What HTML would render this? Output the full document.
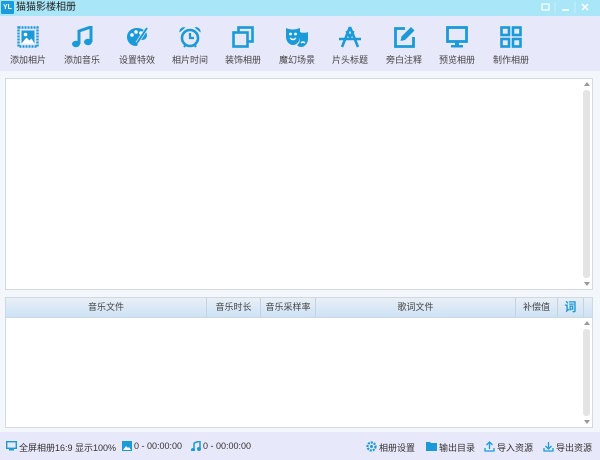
<!DOCTYPE html>
<html><head><meta charset="utf-8"><style>
*{margin:0;padding:0;box-sizing:border-box}
body{width:600px;height:460px;overflow:hidden;background:#f3f7fc;font-family:"Liberation Sans","Noto Sans CJK SC",sans-serif;font-size:9px;color:#333;position:relative}
.title{position:absolute;left:0;top:0;width:600px;height:16px;background:#a9e6f7}
.logo{position:absolute;left:1px;top:1px;width:13px;height:13px;background:#1b9be0;color:#fff;font-size:7px;font-weight:bold;line-height:13px;text-align:center;border-radius:1px}
.ttext{position:absolute;left:16px;top:2px;font-size:10px;line-height:12px;color:#222}
.tb{position:absolute;left:0;top:16px;width:600px;height:55px;background:#e8e8fb}
.it{position:absolute;top:0;width:54px;text-align:center}
.it svg{position:absolute;left:16px;top:10px;width:22px;height:22px}
.it span{position:absolute;left:0;top:37px;width:54px;font-size:9px;color:#444}
.p1{position:absolute;left:5px;top:78px;width:588px;height:212px;background:#fff;border:1px solid #d5d9e0}
.sb{position:absolute;right:1px;width:9px;background:#fff}
.thumb{position:absolute;left:1px;width:7px;background:#e4e4e4;border-radius:3px}
.hdr{position:absolute;left:5px;top:297px;width:588px;height:21px;background:linear-gradient(#e9eff7,#cde2f5);border:1px solid #d0d8e2}
.hdr div{position:absolute;top:0;height:19px;line-height:19px;text-align:center;border-right:1px solid #c8d2de;color:#444}
.p2{position:absolute;left:5px;top:318px;width:588px;height:110px;background:#fff;border:1px solid #d5d9e0;border-top:none}
.st{position:absolute;left:0;top:432px;width:600px;height:28px;background:#e8e8fb}
.st span{position:absolute;top:9px;font-size:9px;color:#333;white-space:nowrap}
.ico{position:absolute;top:9px}
</style></head><body>
<div class="title"><div class="logo">YL</div><div class="ttext">猫猫影楼相册</div>
<svg style="position:absolute;left:538px;top:2px" width="58" height="11"><rect x="4" y="2" width="7" height="6" fill="none" stroke="#fff" stroke-width="1.2"/><line x1="24" y1="8" x2="31" y2="8" stroke="#fff" stroke-width="1.5"/><path d="M44 2l6 6M50 2l-6 6" stroke="#fff" stroke-width="1.5"/><line x1="17" y1="0" x2="17" y2="11" stroke="#c9eefa"/><line x1="37" y1="0" x2="37" y2="11" stroke="#c9eefa"/></svg></div>
<div class="tb">
<div class="it" style="left:1px"><svg viewBox="0 0 22 22"><rect x="1.5" y="1.5" width="19" height="19" fill="none" stroke="#1a9ad9" stroke-width="2.4" stroke-dasharray="2 1"/><rect x="4.5" y="4.5" width="13" height="13" fill="#1a9ad9"/><circle cx="8.5" cy="8.5" r="1.8" fill="#fff"/><path d="M4.5 17.5l5-6 3 3 2-2 3 5z" fill="#fff"/></svg><span>添加相片</span></div>
<div class="it" style="left:55px"><svg viewBox="0 0 22 22"><path d="M8 5l12-4v15" fill="none" stroke="#1a9ad9" stroke-width="3"/><path d="M8 4v14" stroke="#1a9ad9" stroke-width="3"/><ellipse cx="5" cy="18" rx="4" ry="3.2" fill="#1a9ad9"/><ellipse cx="17" cy="16" rx="4" ry="3.2" fill="#1a9ad9"/></svg><span>添加音乐</span></div>
<div class="it" style="left:110px"><svg viewBox="0 0 22 22"><path d="M11 2C5 2 1 6 1 11s4 9 9 9c2 0 2-2 1-3s0-3 2-3h3c3 0 5-2 5-5C21 5 16 2 11 2z" fill="#1a9ad9"/><circle cx="6" cy="9" r="1.8" fill="#fff"/><circle cx="10" cy="6" r="1.8" fill="#fff"/><circle cx="15" cy="7" r="1.8" fill="#fff"/><path d="M21 2L11 17" stroke="#e8e8fb" stroke-width="3.4"/><path d="M21 2L11 17" stroke="#1a9ad9" stroke-width="2"/></svg><span>设置特效</span></div>
<div class="it" style="left:163px"><svg viewBox="0 0 22 22"><circle cx="11" cy="12" r="8" fill="none" stroke="#1a9ad9" stroke-width="2.6"/><path d="M11 7v5h4" fill="none" stroke="#1a9ad9" stroke-width="2.2"/><path d="M0.5 6.5a4.5 4.5 0 0 1 6-5zM21.5 6.5a4.5 4.5 0 0 0-6-5z" fill="#1a9ad9"/><path d="M5 21l2-2.5M17 21l-2-2.5" stroke="#1a9ad9" stroke-width="2.2"/></svg><span>相片时间</span></div>
<div class="it" style="left:216px"><svg viewBox="0 0 22 22"><rect x="6.5" y="1.5" width="14" height="14" fill="none" stroke="#1a9ad9" stroke-width="2.6"/><rect x="1.5" y="6.5" width="14" height="14" fill="#e8e8fb" stroke="#1a9ad9" stroke-width="2.6"/></svg><span>装饰相册</span></div>
<div class="it" style="left:270px"><svg viewBox="0 0 22 22"><path d="M0 2c4 2 9 2 14 0v9c0 4-3 8-7 8s-7-4-7-8z" fill="#1a9ad9"/><circle cx="4.5" cy="8" r="1.4" fill="#fff"/><circle cx="9.5" cy="8" r="1.4" fill="#fff"/><path d="M4 12q3 3 6 0" stroke="#fff" stroke-width="1.4" fill="none"/><path d="M14 6c2 1 6 1 8 0v7c0 4-3 8-7 8-2 0-3-1-4-2 2-1 3-4 3-6z" fill="#1a9ad9"/><path d="M15 17q2-2 4 0" stroke="#fff" stroke-width="1.3" fill="none"/></svg><span>魔幻场景</span></div>
<div class="it" style="left:323px"><svg viewBox="0 0 22 22"><path d="M11 1L3 21M11 1l8 20M7.5 5l3.5 6 3.5-6" fill="none" stroke="#1a9ad9" stroke-width="2.6"/><path d="M0 13h22" stroke="#1a9ad9" stroke-width="2.6"/></svg><span>片头标题</span></div>
<div class="it" style="left:377px"><svg viewBox="0 0 22 22"><path d="M12 2.5H2.5v18h18V11" fill="none" stroke="#1a9ad9" stroke-width="2.8"/><path d="M18 1l3.5 3.5-9.5 9.5-4.5 1 1-4.5z" fill="#1a9ad9"/></svg><span>旁白注释</span></div>
<div class="it" style="left:430px"><svg viewBox="0 0 22 22"><rect x="1.5" y="1.5" width="19" height="14" fill="none" stroke="#1a9ad9" stroke-width="2.8"/><rect x="9" y="16" width="4" height="3" fill="#1a9ad9"/><rect x="5" y="19" width="12" height="2.5" fill="#1a9ad9"/></svg><span>预览相册</span></div>
<div class="it" style="left:484px"><svg viewBox="0 0 22 22"><g fill="none" stroke="#1a9ad9" stroke-width="2.6"><rect x="1.5" y="1.5" width="7.5" height="7.5"/><rect x="13" y="1.5" width="7.5" height="7.5"/><rect x="1.5" y="13" width="7.5" height="7.5"/><rect x="13" y="13" width="7.5" height="7.5"/></g></svg><span>制作相册</span></div>
</div>
<div class="p1"><div class="sb" style="top:1px;bottom:1px"><div style="position:absolute;top:2px;left:2px;border:3px solid transparent;border-bottom:4px solid #999;border-top:none"></div><div class="thumb" style="top:10px;bottom:10px"></div><div style="position:absolute;bottom:2px;left:2px;border:3px solid transparent;border-top:4px solid #999;border-bottom:none"></div></div></div>
<div class="hdr">
<div style="left:0;width:201px">音乐文件</div>
<div style="left:201px;width:54px">音乐时长</div>
<div style="left:255px;width:55px">音乐采样率</div>
<div style="left:310px;width:200px">歌词文件</div>
<div style="left:510px;width:42px">补偿值</div>
<div style="left:552px;width:26px;color:#1a9ad9;font-size:12px;font-weight:bold">词</div>
</div>
<div class="p2"><div class="sb" style="top:1px;bottom:1px"><div style="position:absolute;top:2px;left:2px;border:3px solid transparent;border-bottom:4px solid #999;border-top:none"></div><div class="thumb" style="top:10px;bottom:10px"></div><div style="position:absolute;bottom:2px;left:2px;border:3px solid transparent;border-top:4px solid #999;border-bottom:none"></div></div></div>
<div class="st">
<svg class="ico" style="left:6px" width="11" height="10"><rect x="0.7" y="0.7" width="9.6" height="6.6" fill="none" stroke="#1a9ad9" stroke-width="1.4"/><rect x="3" y="8" width="5" height="1.5" fill="#1a9ad9"/></svg><span style="left:19px">全屏相册16:9 显示100%</span>
<svg class="ico" style="left:122px" width="10" height="10"><rect width="10" height="10" fill="#1a9ad9"/><path d="M1 9l3-4 2 2 1-1 2 3z" fill="#fff"/></svg><span style="left:134px">0 - 00:00:00</span>
<svg class="ico" style="left:191px" width="10" height="10"><path d="M3 2l6-2v8" fill="none" stroke="#1a9ad9" stroke-width="1.5"/><path d="M3 2v7" stroke="#1a9ad9" stroke-width="1.5"/><circle cx="2" cy="9" r="2" fill="#1a9ad9"/><circle cx="8" cy="8" r="2" fill="#1a9ad9"/></svg><span style="left:203px">0 - 00:00:00</span>
<svg class="ico" style="left:366px" width="11" height="11"><circle cx="5.5" cy="5.5" r="4" fill="none" stroke="#1a9ad9" stroke-width="2.2" stroke-dasharray="2 1"/><circle cx="5.5" cy="5.5" r="1.5" fill="#1a9ad9"/></svg><span style="left:379px">相册设置</span>
<svg class="ico" style="left:426px" width="11" height="10"><path d="M0 1h4l1 1h6v8H0z" fill="#1a9ad9"/></svg><span style="left:439px">输出目录</span>
<svg class="ico" style="left:484px" width="11" height="11"><path d="M5.5 8V1M2.5 4l3-3 3 3M1 7v3h9V7" fill="none" stroke="#1a9ad9" stroke-width="1.3"/></svg><span style="left:497px">导入资源</span>
<svg class="ico" style="left:543px" width="11" height="11"><path d="M5.5 1v7M2.5 5l3 3 3-3M1 7v3h9V7" fill="none" stroke="#1a9ad9" stroke-width="1.3"/></svg><span style="left:556px">导出资源</span>
</div>
</body></html>
